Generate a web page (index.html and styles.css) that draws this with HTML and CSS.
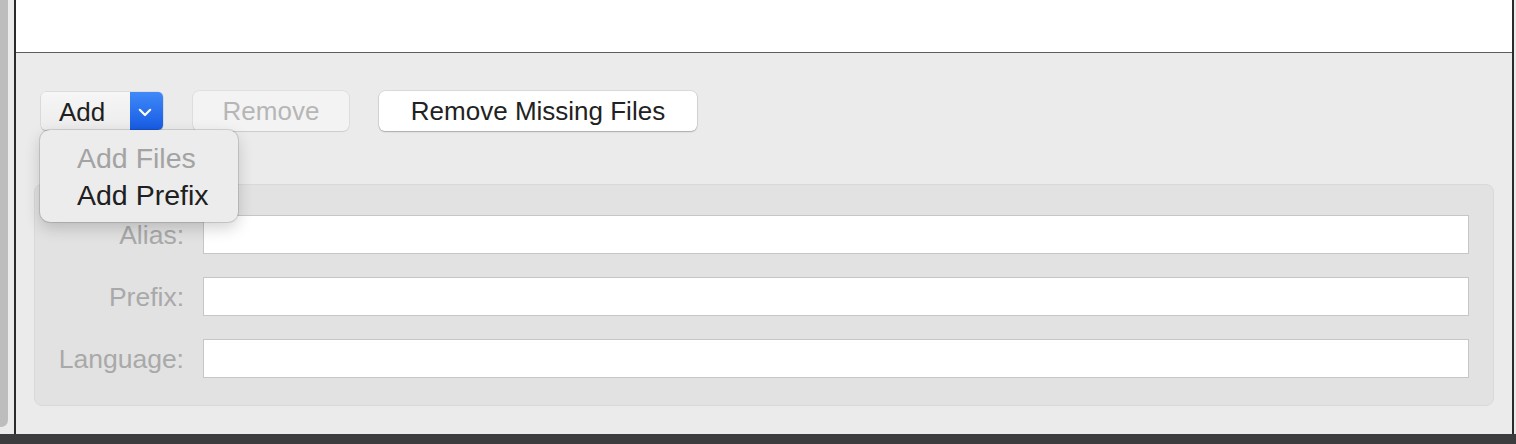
FILE: index.html
```html
<!DOCTYPE html>
<html>
<head>
<meta charset="utf-8">
<link rel="stylesheet" href="styles.css">
</head>
<body>
<div class="window">
  <div class="sidebar-edge"><div class="sidebar-strip"></div></div>
  <div class="divider"></div>
  <div class="main">
    <div class="list-area"></div>
    <div class="panel">
      <div class="button-row">
        <div class="add-wrap">
          <div class="add-btn">
            <span class="add-label">Add</span>
            <span class="add-arrow">
              <svg width="14" height="9" viewBox="0 0 14 9"><path d="M1.8 1.8 L7 7 L12.2 1.8" fill="none" stroke="#fff" stroke-width="2.2" stroke-linecap="round" stroke-linejoin="round"/></svg>
            </span>
          </div>
          <div class="menu">
            <div class="menu-item disabled">Add Files</div>
            <div class="menu-item">Add Prefix</div>
          </div>
        </div>
        <button class="btn disabled-btn">Remove</button>
        <button class="btn wide-btn">Remove Missing Files</button>
      </div>
      <div class="group">
        <label class="field-label">Alias:</label>
        <div class="field"></div>
        <label class="field-label">Prefix:</label>
        <div class="field"></div>
        <label class="field-label">Language:</label>
        <div class="field"></div>
      </div>
    </div>
  </div>
  <div class="divider"></div>
  <div class="right-edge"></div>
</div>
<div class="bottom-bar"></div>
</body>
</html>
```
FILE: styles.css
```css
* { box-sizing: border-box; }
html, body { margin: 0; padding: 0; }
body {
  width: 1516px;
  height: 444px;
  overflow: hidden;
  background: #ebebeb;
  font-family: "Liberation Sans", Arial, sans-serif;
  color: #222;
}
.window {
  display: flex;
  height: 434px;
}
.sidebar-edge {
  width: 14px;
  background: #ebebeb;
  display: flex;
}
.sidebar-strip {
  width: 8px;
  height: 427px;
  background: #bdbdbd;
  border-bottom-right-radius: 7px;
}
.divider {
  width: 2px;
  background: #2b2b2b;
}
.right-edge {
  width: 2px;
  background: #ebebeb;
}
.main {
  flex: 1;
  display: flex;
  flex-direction: column;
  background: #ebebeb;
}
.list-area {
  height: 53px;
  background: #fff;
  border-bottom: 1px solid #5d5d5d;
}
.panel {
  flex: 1;
  padding: 38px 18px 0 18px;
}
.button-row {
  display: flex;
  align-items: center;
  gap: 30px;
  padding-left: 7px;
  height: 40px;
}
.add-wrap {
  position: relative;
}
.add-btn {
  display: flex;
  width: 122px;
  height: 38px;
  border-radius: 5px;
  box-shadow: 0 0 0 0.5px rgba(0,0,0,0.12), 0 1px 1px rgba(0,0,0,0.18);
  overflow: hidden;
}
.add-label {
  flex: 1;
  background: linear-gradient(#f6f6f6, #ececec);
  font-size: 26px;
  line-height: 40px;
  padding-left: 18px;
  color: #1f1f1f;
}
.add-arrow {
  width: 33px;
  background: linear-gradient(#3f89f9, #175ae2);
  display: flex;
  align-items: center;
  justify-content: center;
  padding-right: 4px;
  padding-top: 2px;
}
.btn {
  height: 40px;
  border: none;
  border-radius: 6px;
  background: #fff;
  font-family: "Liberation Sans", Arial, sans-serif;
  font-size: 26px;
  color: #222;
  padding: 0;
  box-shadow: 0 0 0 0.5px rgba(0,0,0,0.14), 0 1px 1.5px rgba(0,0,0,0.22);
}
.wide-btn {
  width: 318px;
}
.disabled-btn {
  width: 156px;
  background: #f3f3f3;
  color: #b6b6b6;
  box-shadow: 0 0 0 0.5px rgba(0,0,0,0.1), 0 1px 1px rgba(0,0,0,0.08);
}
.menu {
  position: absolute;
  top: 38px;
  left: -1px;
  width: 198px;
  height: 92px;
  background: #ececec;
  border-radius: 10px;
  box-shadow: 0 0 0 1px rgba(0,0,0,0.12), 0 6px 16px rgba(0,0,0,0.18);
  padding-top: 10px;
  z-index: 10;
}
.menu-item {
  font-size: 28.5px;
  line-height: 37px;
  padding-left: 37px;
  color: #202020;
}
.menu-item.disabled {
  color: #a3a3a3;
}
.group {
  margin-top: 53px;
  background: #e2e2e2;
  border: 1px solid #d9d9d9;
  border-radius: 8px;
  display: grid;
  grid-template-columns: 149px 1fr;
  grid-auto-rows: 39px;
  column-gap: 19px;
  row-gap: 23px;
  padding: 30px 24px 27px 0;
}
.field-label {
  text-align: right;
  font-size: 26.5px;
  line-height: 40px;
  height: 39px;
  color: #a9a9a9;
}
.field {
  height: 39px;
  background: #fff;
  border: 1px solid #c6c6c6;
}
.bottom-bar {
  height: 10px;
  background: #3c3c3e;
}
```
